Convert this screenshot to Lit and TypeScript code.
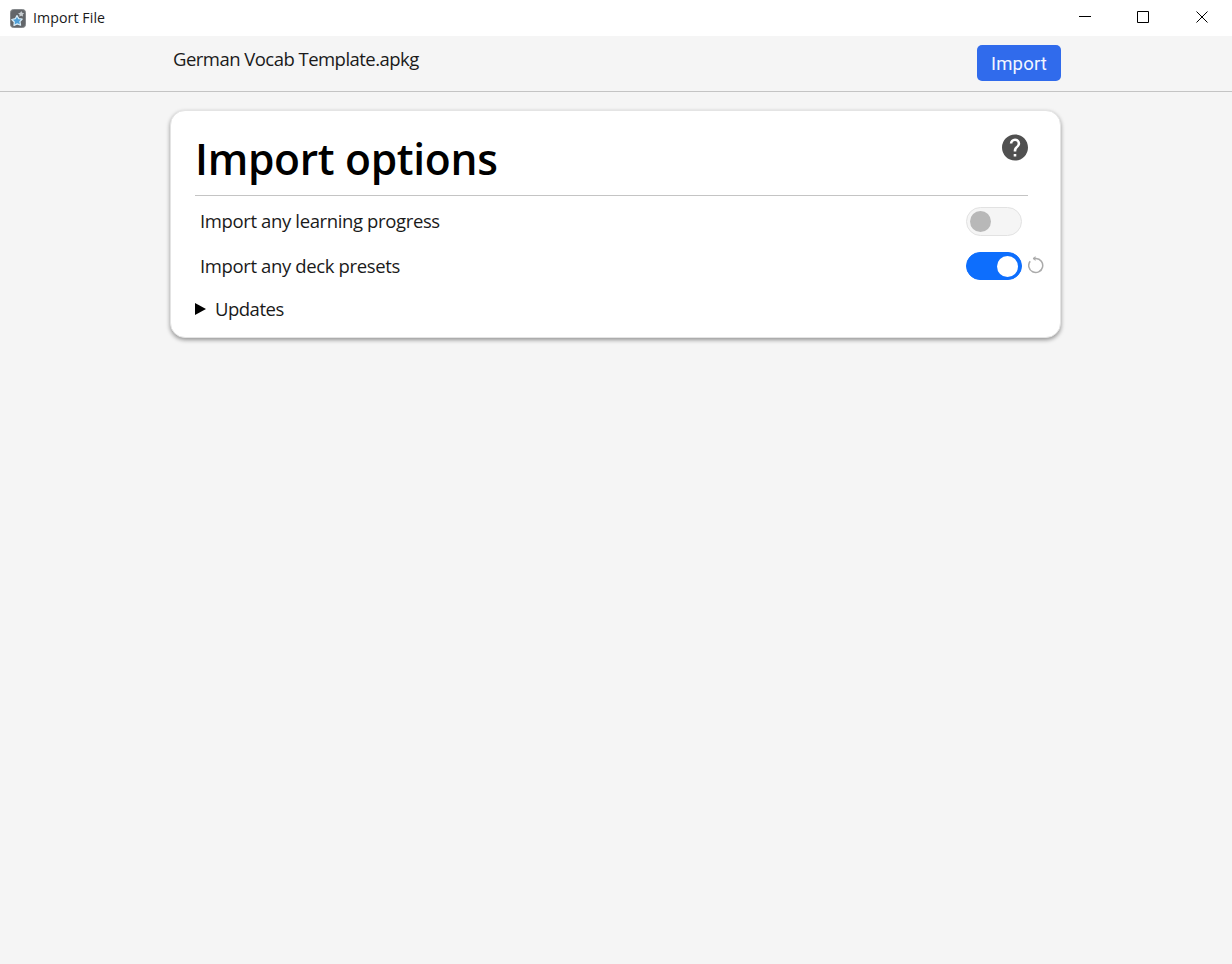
import { LitElement, html, css, svg, nothing } from 'lit';
import { customElement, property, state } from 'lit/decorators.js';

@customElement('toggle-switch')
export class ToggleSwitch extends LitElement {
    static styles = css`
        :host {
            display: block;
        }
        .track {
            display: flex;
            align-items: center;
            box-sizing: border-box;
            width: 56px;
            height: 29px;
            padding: 0 3px;
            border: 1px solid #e2e2e2;
            border-radius: 15px;
            background: #f5f5f5;
            cursor: pointer;
        }
        .knob {
            width: 21px;
            height: 21px;
            border-radius: 50%;
            background: #b8b8b8;
        }
        :host([checked]) .track {
            justify-content: flex-end;
            height: 28px;
            border-color: #0d6efd;
            background: #0d6efd;
        }
        :host([checked]) .knob {
            background: #fff;
        }
    `;

    @property({ type: Boolean, reflect: true })
    checked = false;

    render() {
        return html`
            <div class="track" role="switch" aria-checked=${this.checked} @click=${this._toggle}>
                <div class="knob"></div>
            </div>
        `;
    }

    private _toggle() {
        this.checked = !this.checked;
        this.dispatchEvent(new CustomEvent('toggle-change', {
            detail: { checked: this.checked },
            bubbles: true,
            composed: true,
        }));
    }
}

const appIcon = svg`
    <rect x="0.5" y="0.5" width="15" height="18" rx="3" fill="#63666a" stroke="#85888b"/>
    <path d="M11.200 2l1 1.800 2 .4-1.400 1.400.2 2-1.800-.8-1.800.8.2-2L8 4.200l2.200-.4z" fill="#c7cdd1"/>
    <path d="M7 6.600l1.700 3 3.500.4-2.300 2.700.7 3.500-3.400-1.300-3.200 1.600.3-3.500-2.500-2.500 3.500-.8z" fill="#4f9fd6" stroke="#d9edf8" stroke-width="1.200" stroke-linejoin="round"/>
`;

@customElement('app-root')
export class AppRoot extends LitElement {
    static styles = css`
        :host {
            display: flex;
            flex-direction: column;
            height: 100vh;
            background: #f5f5f5;
            color: #1a1a1a;
            font-family: 'Segoe UI', 'Open Sans', 'Noto Sans', sans-serif;
            font-size: 18.5px;
            letter-spacing: -0.37px;
        }
        svg {
            display: block;
        }
        .titlebar {
            display: flex;
            align-items: center;
            height: 36px;
            padding: 0 1px 0 10px;
            background: #fff;
        }
        .titlebar .name {
            flex: 1;
            margin: -2px 0 0 7px;
            font-size: 14.2px;
            letter-spacing: 0.07px;
        }
        .window-button {
            display: flex;
            justify-content: center;
            width: 58.5px;
            margin-top: -2px;
        }
        .header {
            box-sizing: border-box;
            height: 56px;
            border-bottom: 1px solid #c4c4c4;
        }
        .container {
            box-sizing: border-box;
            width: 891px;
            margin: 0 171px 0 170px;
        }
        .header .container {
            display: flex;
            justify-content: space-between;
            padding: 9px 0 0 3px;
        }
        .path {
            line-height: 28px;
            letter-spacing: -0.53px;
        }
        .import {
            width: 84px;
            height: 36px;
            padding: 2px 0 0;
            border: none;
            border-radius: 5px;
            background: #306bec;
            color: #f2f6ff;
            font-family: Roboto, sans-serif;
            font-size: 18.5px;
            line-height: 34px;
            letter-spacing: 0.2px;
        }
        .card {
            height: 228px;
            margin-top: 18px;
            padding: 0 16px 0 24px;
            border: 1px solid #e4e4e4;
            border-radius: 15px;
            background: #fff;
            box-shadow: 0 2px 4px rgba(0, 0, 0, 0.4);
        }
        .heading {
            display: flex;
            justify-content: space-between;
            box-sizing: border-box;
            height: 85px;
            width: 833px;
            border-bottom: 1px solid #c4c4c4;
        }
        h1 {
            margin: 0;
            color: #000;
            font-size: 42.5px;
            font-weight: 600;
            line-height: 96px;
            letter-spacing: -0.3px;
        }
        .help {
            margin-top: 23px;
        }
        .row {
            display: flex;
            align-items: center;
            height: 44px;
            margin-left: 5px;
        }
        .heading + .row {
            height: 45px;
            margin-top: 3px;
        }
        .row .label {
            flex: 1;
            margin-top: -2px;
        }
        .revert {
            width: 22px;
            margin-top: -2px;
            padding-left: 6px;
            box-sizing: border-box;
        }
        .updates {
            display: flex;
            align-items: center;
            height: 43px;
            gap: 9px;
        }
        .updates svg {
            margin-top: -1px;
        }
        .updates span {
            margin-top: -2px;
            letter-spacing: -0.5px;
        }
    `;

    @state()
    private learningProgress = false;

    @state()
    private deckPresets = true;

    render() {
        return html`
            <div class="titlebar">
                <svg width="16" height="19" viewBox="0 0 16 19">${appIcon}</svg>
                <span class="name">Import File</span>
                ${this._windowButton('M0 5.5h12')}
                ${this._windowButton('M.5.5h11v11H.5z')}
                ${this._windowButton('M.5.5l11 11M11.5.5l-11 11')}
            </div>
            <div class="header">
                <div class="container">
                    <span class="path">German Vocab Template.apkg</span>
                    <button class="import">Import</button>
                </div>
            </div>
            <div class="container card">
                <div class="heading">
                    <h1>Import options</h1>
                    <svg class="help" width="26" height="27" viewBox="2 2 20 20">
                        <path fill="#505050" d="M15.070 11.250l-.9.920C13.450 12.890 13 13.500 13 15h-2v-.5c0-1.110.450-2.110 1.170-2.830l1.240-1.260c.370-.360.590-.860.590-1.410a2 2 0 0 0-2-2 2 2 0 0 0-2 2H8a4 4 0 0 1 4-4 4 4 0 0 1 4 4c0 .880-.360 1.670-.930 2.250M13 19h-2v-2h2M12 2A10 10 0 0 0 2 12a10 10 0 0 0 10 10 10 10 0 0 0 10-10c0-5.530-4.500-10-10-10z"/>
                    </svg>
                </div>
                ${this._row('Import any learning progress', this.learningProgress, (v) => (this.learningProgress = v))}
                ${this._row('Import any deck presets', this.deckPresets, (v) => (this.deckPresets = v))}
                <div class="updates">
                    <svg width="11" height="12" viewBox="0 0 11 12"><path d="M0 0l11 6-11 6z"/></svg>
                    <span>Updates</span>
                </div>
            </div>
        `;
    }

    private _windowButton(path: string) {
        return html`
            <div class="window-button">
                <svg width="12" height="12" viewBox="0 0 12 12" fill="none" stroke="#000"><path d=${path}/></svg>
            </div>
        `;
    }

    private _row(label: string, checked: boolean, onChange: (v: boolean) => void) {
        return html`
            <div class="row">
                <span class="label">${label}</span>
                <toggle-switch
                    ?checked=${checked}
                    @toggle-change=${(e: CustomEvent) => onChange(e.detail.checked)}
                ></toggle-switch>
                <div class="revert">
                    ${checked ? html`
                        <svg width="16" height="18" viewBox="0 0 16 18" fill="none" stroke="#aaa" stroke-width="1.5">
                            <path d="M2.200 5.200A7 7 0 1 0 8 2.500H5"/>
                            <path d="M7.500 0v5L4.800 2.500z" fill="#aaa" stroke="none"/>
                        </svg>
                    ` : nothing}
                </div>
            </div>
        `;
    }
}
